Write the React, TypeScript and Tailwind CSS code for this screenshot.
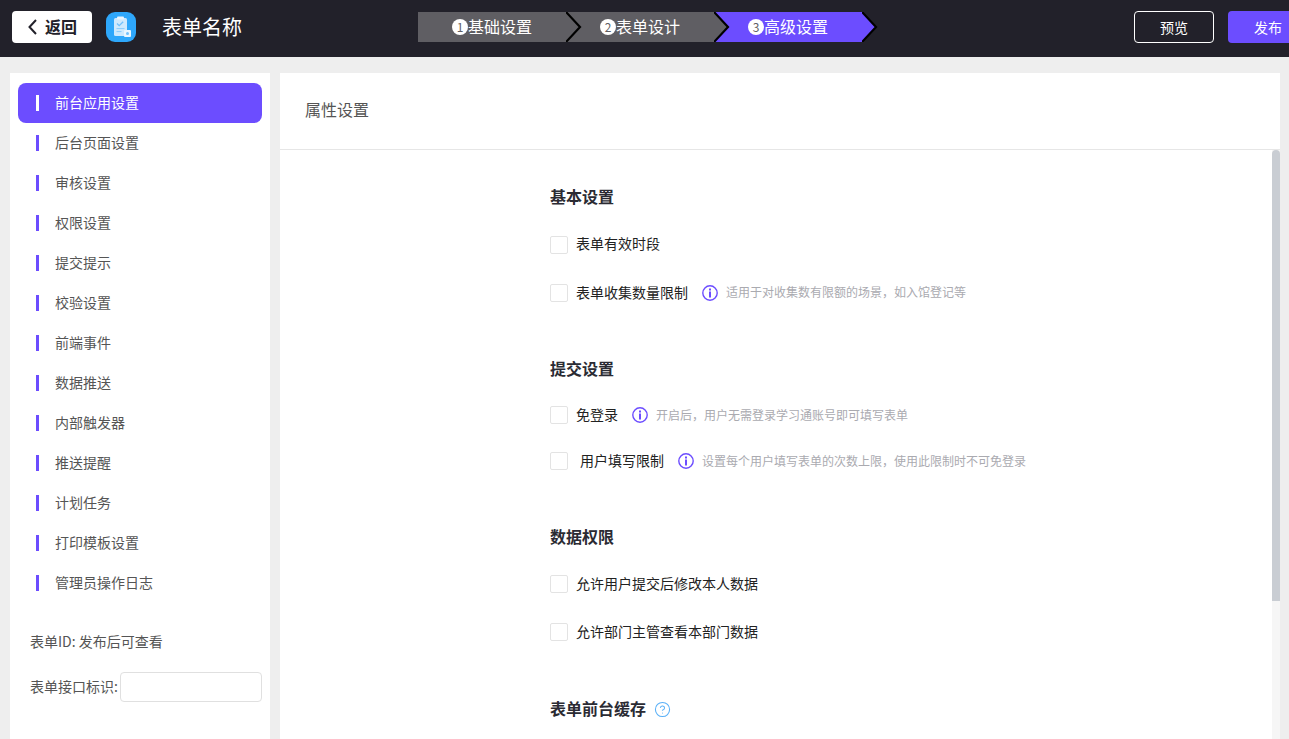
import React from 'react';
import { CircleHelp } from 'lucide-react';

const menus = [
  '前台应用设置',
  '后台页面设置',
  '审核设置',
  '权限设置',
  '提交提示',
  '校验设置',
  '前端事件',
  '数据推送',
  '内部触发器',
  '推送提醒',
  '计划任务',
  '打印模板设置',
  '管理员操作日志',
];

const steps = [
  { no: 1, label: '基础设置', active: false },
  { no: 2, label: '表单设计', active: false },
  { no: 3, label: '高级设置', active: true },
];

const InfoIcon = () => (
  <svg width="16" height="16" viewBox="0 0 16 16" className="shrink-0">
    <circle cx="8" cy="8" r="7.2" fill="none" stroke="#6c4dff" strokeWidth="1.4" />
    <rect x="7" y="3.5" width="2" height="2" fill="#6c4dff" />
    <rect x="7" y="6.5" width="2" height="6" fill="#6c4dff" />
  </svg>
);

const FormIcon = () => (
  <svg width="30" height="30" viewBox="0 0 30 30">
    <rect x="8" y="6" width="13" height="18" rx="1.5" fill="#cfe9fd" />
    <rect x="11" y="4.5" width="7" height="3" rx="1" fill="#eaf6ff" />
    <path d="M11 11.5l2.2 2.2 4-4" fill="none" stroke="#72c0fb" strokeWidth="1.3" />
    <rect x="10.5" y="16" width="8" height="1.1" fill="#8fcefc" />
    <rect x="10.5" y="19" width="5" height="1.1" fill="#8fcefc" />
    <rect x="18" y="18" width="7" height="7" rx="1" fill="#eaf6ff" />
    <circle cx="21.5" cy="21.5" r="1.5" fill="#72c0fb" />
  </svg>
);

const StepArrow = ({ color }: { color: string }) => (
  <svg width="20" height="30" viewBox="0 0 20 30" className="absolute left-full top-0 z-10">
    <path d="M0 0L14 15L0 30Z" fill={color} />
    <path d="M0 0L14 15L0 30" fill="none" stroke="#000" strokeWidth="2.2" />
  </svg>
);

interface CheckProps {
  text: string;
  hint?: string;
  className?: string;
  textClass?: string;
  hintClass?: string;
}

const Check = ({ text, hint, className, textClass = 'mb-[2px]', hintClass = 'mb-[2px]' }: CheckProps) => (
  <div className={`flex items-center h-[18px] ${className ?? ''}`}>
    <span className="w-[18px] h-[18px] border border-[#e3e3e3] rounded-[2px] shrink-0"></span>
    <span className={`${textClass} text-[14px] text-[#222] ${text === '用户填写限制' ? 'ml-3' : 'ml-2'}`}>{text}</span>
    {hint && (
      <>
        <span className="ml-[14px] flex"><InfoIcon /></span>
        <span className={`ml-2 ${hintClass} text-[12px] text-[#aaaab0]`}>{hint}</span>
      </>
    )}
  </div>
);

const Title = ({ text, className }: { text: string; className?: string }) => (
  <h2 className={`h-6 leading-[22px] text-[16px] font-semibold text-[#2b2b33] ${className ?? ''}`}>{text}</h2>
);

const App: React.FC = () => {
  return (
    <div className="h-[739px] w-full overflow-hidden bg-[#eeeeee] font-['Microsoft_YaHei','Noto_Sans_CJK_SC',sans-serif]">
      <header className="flex items-center h-[57px] bg-[#22212a] pl-3 pb-[3px] overflow-hidden">
        <button className="flex items-center w-20 h-8 pl-4 bg-white rounded-[4px] text-[16px] font-semibold text-[#22212a] shrink-0">
          <svg width="9" height="16" viewBox="0 0 9 16" className="mr-2 shrink-0">
            <path d="M8 1L1.5 8L8 15" fill="none" stroke="#22212a" strokeWidth="2" />
          </svg>
          <span className="mb-[2px]">返回</span>
        </button>
        <div className="ml-[14px] w-[30px] h-[30px] rounded-[9px] bg-[#2ea7fb] shrink-0">
          <FormIcon />
        </div>
        <div className="ml-[26px] mb-[1px] w-20 text-[20px] text-white shrink-0">表单名称</div>
        <div className="flex ml-[176px] shrink-0">
          {steps.map((s) => (
            <div
              key={s.no}
              className={`relative flex items-center justify-center w-[148px] h-[30px] text-[16px] text-white ${s.active ? 'bg-[#6c4dff]' : 'bg-[#5f5e63]'}`}
            >
              <span className="flex items-center justify-center w-4 h-4 rounded-full bg-white text-[12px] text-[#5f5e63]">{s.no}</span>
              <span className="mb-[2px]">{s.label}</span>
              <StepArrow color={s.active ? '#6c4dff' : '#5f5e63'} />
            </div>
          ))}
        </div>
        <button className="ml-[272px] w-20 h-8 border border-white rounded-[4px] text-[14px] text-white shrink-0">预览</button>
        <button className="ml-[14px] w-20 h-8 bg-[#6c4dff] rounded-[4px] text-[14px] text-white shrink-0">发布</button>
      </header>

      <div className="flex gap-[10px] pt-4 px-[10px] pr-[9px]">
        <aside className="w-[260px] h-[666px] bg-white pt-[10px] px-2 shrink-0">
          {menus.map((m, i) => (
            <div
              key={m}
              className={`flex items-center h-10 pl-[18px] rounded-lg text-[14px] ${i === 0 ? 'bg-[#6c4dff] text-white' : 'text-[#555555]'}`}
            >
              <span className={`w-[3px] h-4 ${i === 0 ? 'bg-white' : 'bg-[#6c4dff]'}`}></span>
              <span className="ml-4 mb-[2px]">{m}</span>
            </div>
          ))}
          <div className="mt-[28px] pl-3 h-5 leading-5 text-[14px] text-[#555555]">表单ID: 发布后可查看</div>
          <div className="flex items-center mt-[21px] pl-3 text-[14px] text-[#555555]">
            <span className="mb-[2px] whitespace-nowrap">表单接口标识:</span>
            <input className="ml-[2px] w-[142px] h-[30px] border border-[#e0e0e0] rounded-[4px] bg-white outline-none" />
          </div>
        </aside>

        <main className="flex-1 h-[666px] bg-white">
          <div className="flex items-center h-[77px] pl-[25px] pb-[5px] border-b border-[#e6e6e6] text-[16px] text-[#555555]">
            属性设置
          </div>
          <div className="flex h-[589px]">
            <div className="flex-1 pl-[270px] pt-[35px]">
              <Title text="基本设置" />
              <Check text="表单有效时段" className="mt-[27px]" textClass="mb-[4px]" />
              <Check text="表单收集数量限制" hint="适用于对收集数有限额的场景，如入馆登记等" className="mt-[30px]" />

              <Title text="提交设置" className="mt-[55px]" />
              <Check text="免登录" hint="开启后，用户无需登录学习通账号即可填写表单" className="mt-[25px]" hintClass="mb-0" />
              <Check text="用户填写限制" hint="设置每个用户填写表单的次数上限，使用此限制时不可免登录" className="mt-7" hintClass="mb-0" />

              <Title text="数据权限" className="mt-[55px]" />
              <Check text="允许用户提交后修改本人数据" className="mt-[26px]" />
              <Check text="允许部门主管查看本部门数据" className="mt-[30px]" />

              <div className="flex items-center mt-[56px]">
                <Title text="表单前台缓存" />
                <CircleHelp size={17} strokeWidth={1.5} className="ml-[8px] text-[#5ab0f7]" />
              </div>
            </div>
            <div className="w-2 bg-[#f6f6f6] shrink-0">
              <div className="h-[451px] bg-[#c9cdd3] rounded-t-[4px]"></div>
            </div>
          </div>
        </main>
      </div>
    </div>
  );
};

export default App;
